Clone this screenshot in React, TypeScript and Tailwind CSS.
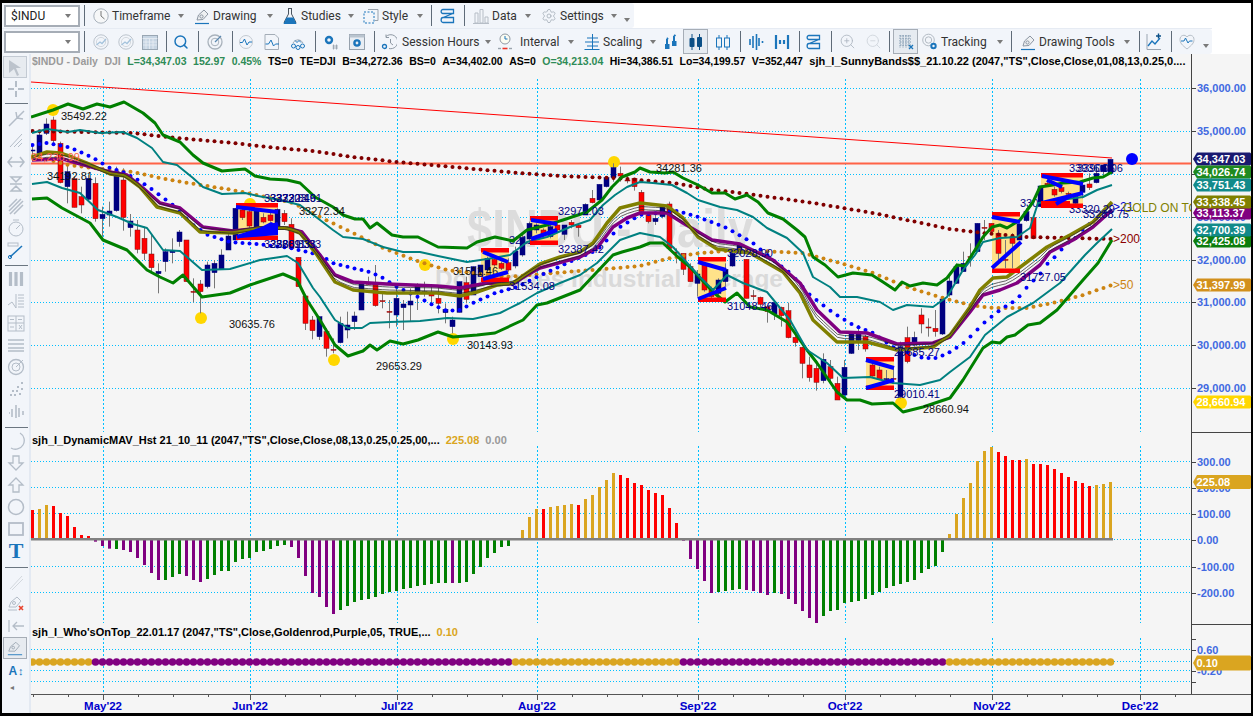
import { Settings, Search, ZoomIn, ZoomOut } from 'lucide-react';
import type { ReactNode } from 'react';

// chart data is read off the screenshot, in page pixels
const barX = (i: number) => 32.5 + 7 * i;

type Pts = number[][];

const upperGreen: Pts = [[31,117],[53,110],[68,104],[83,109],[97,104],[110,107],[124,102],[143,113],[155,123],[163,135],[180,142],[193,155],[203,163],[222,171],[245,169],[255,176],[270,179],[287,180],[300,183],[315,197],[333,207],[343,215],[355,219],[363,219],[370,228],[377,223],[392,235],[403,237],[418,237],[438,247],[467,248],[477,242],[495,237],[513,241],[527,230],[547,225],[563,220],[587,212],[602,200],[612,187],[622,177],[635,172],[640,168],[650,172],[665,173],[673,172],[683,178],[698,185],[712,193],[725,193],[735,199],[747,195],[758,202],[768,213],[783,219],[797,230],[805,237],[813,257],[825,265],[838,277],[853,273],[872,275],[883,282],[895,290],[902,282],[910,286],[923,283],[937,285],[947,278],[957,265],[965,266],[975,250],[983,237],[992,227],[1000,225],[1007,228],[1020,220],[1033,202],[1040,187],[1053,185],[1063,183],[1080,182],[1093,178],[1103,177],[1112,172]];
const upperTeal: Pts = [[32,133],[47,129],[68,132],[80,130],[100,133],[123,132],[137,138],[152,148],[163,162],[177,165],[193,178],[203,187],[222,194],[245,193],[258,196],[280,200],[300,205],[320,220],[333,230],[343,237],[363,239],[383,247],[403,252],[420,252],[438,256],[467,262],[487,259],[510,255],[527,242],[547,237],[570,227],[590,220],[603,205],[615,195],[627,187],[640,182],[653,183],[672,185],[687,193],[698,200],[720,207],[737,210],[753,217],[767,228],[787,238],[803,253],[813,277],[830,287],[840,297],[857,297],[880,302],[893,310],[907,305],[933,307],[947,297],[963,270],[975,255],[983,242],[1000,238],[1017,237],[1030,228],[1038,203],[1060,200],[1083,197],[1097,190],[1112,185]];
const olive: Pts = [[32,157],[47,152],[60,153],[72,157],[87,163],[110,174],[125,176],[140,187],[157,207],[180,213],[200,232],[233,233],[260,228],[287,228],[300,233],[317,255],[335,282],[353,290],[387,293],[437,293],[460,296],[477,292],[497,285],[513,283],[527,273],[540,264],[560,257],[580,252],[593,243],[607,223],[620,208],[640,203],[667,206],[683,218],[698,237],[717,249],[750,253],[783,272],[800,293],[813,320],[837,342],[867,342],[897,350],[933,347],[950,335],[970,307],[980,290],[993,278],[1007,277],[1027,262],[1047,247],[1070,235],[1093,222],[1112,202]];
const purple: Pts = [[32,160],[63,159],[77,163],[110,172],[127,175],[143,188],[160,203],[180,208],[203,227],[233,231],[260,228],[287,228],[302,232],[320,255],[335,275],[353,282],[387,284],[437,286],[460,288],[487,283],[513,284],[527,275],[540,268],[580,257],[597,248],[613,227],[627,218],[640,213],[667,213],[683,223],[712,240],[740,244],[773,260],[800,283],[817,310],[840,332],[867,333],[897,344],[933,343],[950,337],[970,312],[983,295],[1000,290],[1017,283],[1040,265],[1050,252],[1073,240],[1093,227],[1112,210]];
const lowerTeal: Pts = [[32,184],[47,182],[62,188],[80,193],[98,210],[117,217],[133,224],[147,228],[163,250],[180,251],[202,270],[230,269],[260,260],[287,256],[298,263],[313,288],[320,297],[335,320],[348,328],[362,328],[370,323],[390,322],[420,321],[447,318],[473,319],[500,313],[520,303],[537,293],[560,283],[580,275],[597,263],[620,240],[640,233],[660,237],[673,247],[698,275],[713,290],[727,275],[743,283],[767,292],[790,320],[807,350],[827,363],[843,378],[870,377],[893,383],[920,385],[940,380],[950,372],[970,357],[985,335],[1007,317],[1033,303],[1060,283],[1085,255],[1097,243],[1112,229]];
const lowerGreen: Pts = [[32,199],[47,198],[62,208],[90,223],[103,240],[127,250],[147,270],[160,277],[173,283],[183,275],[202,297],[230,293],[250,285],[283,274],[297,280],[307,300],[320,320],[335,345],[348,356],[363,351],[370,345],[377,350],[390,341],[403,344],[418,340],[438,332],[453,337],[477,335],[495,333],[523,320],[537,305],[547,303],[580,290],[613,255],[622,252],[640,247],[650,243],[663,243],[678,257],[690,267],[713,292],[725,302],[737,293],[750,307],[767,310],[787,322],[807,350],[817,363],[837,392],[847,400],[860,400],[872,404],[893,403],[903,412],[923,407],[950,398],[963,380],[983,348],[992,342],[1000,343],[1007,337],[1015,335],[1028,325],[1040,323],[1057,310],[1083,280],[1098,263],[1112,240]];
const ma200: Pts = [[33,131],[133,133],[167,137],[200,140],[233,143],[267,147],[313,151],[353,157],[397,162],[453,167],[507,172],[560,176],[613,178],[640,180],[673,183],[707,189],[740,193],[807,202],[873,213],[950,229],[983,233],[1027,237],[1067,238],[1112,239]];
const ma50: Pts = [[32,157],[50,160],[68,165],[110,170],[133,172],[160,178],[200,185],[227,189],[257,195],[293,203],[320,217],[353,233],[383,248],[420,262],[447,270],[507,277],[553,273],[593,270],[640,266],[670,258],[700,253],[740,250],[803,253],[840,263],[873,273],[907,287],[943,298],[970,305],[993,308],[1027,308],[1057,302],[1083,295],[1112,285]];
const ma21: Pts = [[33,145],[47,143],[68,147],[83,153],[97,160],[110,168],[123,172],[138,180],[153,190],[173,205],[193,225],[208,235],[230,242],[257,244],[290,248],[320,255],[333,263],[348,267],[370,272],[383,278],[397,287],[418,297],[433,305],[447,311],[460,310],[473,303],[495,293],[517,287],[537,277],[567,263],[597,250],[620,227],[640,215],[677,211],[698,217],[727,228],[753,243],[773,260],[790,273],[810,295],[832,312],[853,325],[873,333],[893,347],[923,358],[937,358],[950,352],[965,342],[985,322],[1000,310],[1013,302],[1021,295],[1027,287],[1034,280],[1042,272],[1048,263],[1056,256],[1062,249],[1069,242],[1077,237],[1083,229],[1097,218],[1112,203]];

const valueAt = (pts: Pts, x: number) => {
  for (let i = 1; i < pts.length; i++) {
    if (x <= pts[i][0]) {
      const [x0, y0] = pts[i - 1];
      const [x1, y1] = pts[i];
      return y0 + ((y1 - y0) * (x - x0)) / (x1 - x0);
    }
  }
  return pts[pts.length - 1][1];
};

const toLine = (pts: Pts) => pts.map((p) => p.join(',')).join(' ');
const barsIdx = Array.from({ length: 155 }, (_, i) => i);

// [colour, wick top, wick bottom, body top, body bottom], y in 3x crop pixels
type C = [string, number, number, number, number];
const c3: C[] = [['n',133,165,150,152],['n',90,170,105,160],['n',55,105,72,100],['r',50,130,60,122],['r',125,250,130,248],['n',190,310,215,260],['r',230,322,236,322],['r',260,340,290,315],['n',225,300,235,298],['r',232,365,250,356],['n',320,410,343,356],['n',305,380,333,345],['n',200,335,215,332],['r',205,392,240,352],['n',342,410,363,383],['r',360,460,390,448],['r',380,480,415,460],['r',405,520,462,503],['n',490,580,514,521],['n',445,515,455,485],['n',415,490,451,458],['n',390,440,396,425],['r',420,545,420,545],['r',535,607,574,575],['r',540,640,552,575],['n',485,565,495,560],['n',480,565,490,518],['n',448,510,465,507],['n',395,450,408,450],['n',325,420,325,420],['r',325,360,330,353],['r',330,385,335,378],['n',325,395,330,390],['r',340,370,352,366],['r',335,365,345,362],['n',325,390,328,385],['r',330,375,340,365],['r',355,445,373,445],['r',472,560,472,560],['r',588,690,588,670],['r',648,718,660,692]];
const c4: C[] = [['n',530,600,530,590],['r',565,650,575,625],['r',595,640,628,629],['n',530,610,550,608],['n',515,595,555,570],['n',515,570,528,545],['n',425,510,425,510],['r',410,435,428,433],['r',375,500,432,497],['r',460,505,482,483],['r',480,565,514,515],['n',435,560,475,525],['n',480,570,492,503],['n',445,545,483,495],['n',430,510,437,460],['n',425,470,455,456],['r',440,490,458,468],['r',440,520,475,490],['n',490,550,508,518],['n',530,580,540,560],['n',425,517,425,517],['r',410,490,428,478],['n',380,465,380,465],['n',375,410,375,410],['n',350,395,355,390],['r',350,380,358,375],['r',365,390,370,385],['r',355,395,368,390],['n',320,385,333,378],['n',285,350,292,345],['n',245,300,250,297],['n',250,280,255,270],['r',265,295,270,285],['n',255,295,260,290],['r',250,275,255,270],['n',255,300,255,283],['r',240,265,247,255],['r',250,290,256,263],['n',190,225,193,225],['r',150,190,175,188],['n',133,180,133,180],['n',110,142,113,140],['n',70,125,83,113],['r',80,125,100,108],['r',105,130,120,121],['r',115,152,115,140]];
const c5: C[] = [['r',120,190,127,185],['r',190,220,195,215],['n',195,225,205,215],['n',165,205,170,200],['r',155,300,162,295],['r',295,340,306,309],['r',310,375,310,358],['r',340,395,350,395],['n',360,440,372,400],['r',340,425,345,420],['r',410,445,415,440],['n',385,435,390,430],['n',340,410,358,395],['n',300,350,310,348],['n',280,315,285,310],['r',328,445,328,445],['r',420,450,437,439],['r',440,480,442,463],['r',465,518,470,485],['n',455,510,457,492],['r',470,530,472,497],['r',458,565,482,563],['r',545,590,562,578],['r',590,685,592,640],['r',620,695,645,683],['r',630,722,655,697],['n',610,700,628,692],['r',630,700,650,685],['r',680,750,700,750],['n',630,738,652,735],['n',545,612,552,610],['n',525,600,552,572],['r',555,605,560,597],['r',630,680,645,678],['r',650,690,660,688],['n',660,700,686,687],['r',650,700,685,687],['n',575,745,590,740],['r',530,640,563,635],['n',545,590,562,585],['r',475,550,495,522],['r',505,560,531,533],['r',480,560,535,545],['n',445,555,447,552],['n',375,440,393,435],['n',340,402,350,400]];
const c6: C[] = [['n',335,395,370,395],['r',310,380,350,351],['n',250,335,250,335],['r',240,300,262,263],['r',250,275,250,275],['r',270,360,280,340],['r',300,385,358,359],['r',280,385,290,310],['n',252,300,252,300],['n',205,245,215,242],['r',225,295,233,295],['n',138,200,138,200],['r',125,140,130,137],['r',140,170,148,165],['r',135,160,143,155],['r',155,165,160,161],['n',165,195,170,190],['n',135,175,135,157],['r',100,150,132,143],['n',85,130,100,128],['n',75,110,75,95],['n',58,100,58,100]];
const candles: C[] = [
  ...c3.map((c) => [c[0], ...c.slice(1).map((v) => 100 + (v as number) / 3)] as C),
  ...c4.map((c) => [c[0], ...c.slice(1).map((v) => 140 + (v as number) / 3)] as C),
  ...c5.map((c) => [c[0], ...c.slice(1).map((v) => 150 + (v as number) / 3)] as C),
  ...c6.map((c) => [c[0], ...c.slice(1).map((v) => 140 + (v as number) / 3)] as C),
];

// histogram tops in 3x crop pixels below y=420, baseline is 357
const histTops = [270,267,255,258,279,288,321,345,348,365,378,386,387,390,396,414,435,459,480,480,471,462,468,480,486,477,465,453,453,426,417,414,396,393,387,378,375,381,414,468,519,531,561,582,570,558,546,540,537,531,522,516,513,507,504,498,495,492,489,489,489,489,486,462,441,414,399,381,378,359,330,291,267,267,261,258,255,252,255,237,225,201,180,159,165,174,189,195,210,219,225,264,309,362,417,447,483,519,516,513,510,507,510,513,519,525,519,522,537,552,573,594,609,588,573,570,549,546,543,537,525,516,504,498,492,486,480,459,447,438,396,342,282,234,189,123,93,81,96,108,120,120,117,132,132,135,147,159,171,183,189,198,195,192,186];
const histCols = 'rggrrrrrrpppnppppppnnnpppnnnnnnnnnnnnpppppppnnnnnnnnnnnn' + 'nnnnpnnnnnnnnggggrggggrgggggrrrrrrrrrpppppnnnnppppnppppppnnn' + 'nnnnnnnnnnnnnnngggggggrrrrgrrrrrrrrrggg';
const histColour: Record<string, string> = { r: '#ff0000', g: '#daa520', p: '#800080', n: '#008000' };

const monthX = [103, 250, 397, 537, 698, 845, 992, 1140];
const months = ["May'22", "Jun'22", "Jul'22", "Aug'22", "Sep'22", "Oct'22", "Nov'22", "Dec'22"];

const behindText: [string, number, number][] = [
  ['32113.25', 509, 244],
  ['33071.90', 1020, 207],
];
const blackText: [string, number, number][] = [
  ['35492.22', 61, 120], ['34192.81', 47, 180], ['33272.34', 299, 215], ['30635.76', 229, 328],
  ['29653.29', 376, 370], ['30143.93', 467, 349], ['31511.46', 453, 275], ['34281.36', 656, 172], ['28660.94', 923, 413],
];
const navyText: [string, number, number][] = [
  ['33272.81', 264, 202], ['33232.46', 270, 202], ['33203.91', 276, 202],
  ['32588.83', 264, 248], ['32609.33', 270, 248], ['32611.33', 276, 248],
  ['32972.03', 558, 215], ['32387.42', 558, 253], ['31534.08', 509, 290],
  ['32028.90', 727, 257], ['31048.46', 727, 310], ['29685.27', 894, 356], ['29010.41', 894, 398],
  ['31727.05', 1020, 281], ['33936.06', 1069, 172], ['33906.06', 1077, 172], ['33320.29', 1069, 213], ['33288.75', 1083, 218],
];
const yellowDots = [[53,110],[201,318],[250,204],[334,360],[425,265],[453,339],[614,162],[901,403]];

type Box = { x: number; w: number; top: number; bot: number; a: number[]; b: number[] };
const boxes: Box[] = [
  { x: 236, w: 42, top: 203, bot: 240, a: [236,207,278,212], b: [237,237,278,224] },
  { x: 481, w: 28, top: 248, bot: 282, a: [483,252,508,262], b: [483,279,508,272] },
  { x: 530, w: 28, top: 216, bot: 245, a: [531,220,557,224], b: [531,239,557,230] },
  { x: 698, w: 28, top: 257, bot: 302, a: [698,262,726,270], b: [698,299,726,288] },
  { x: 866, w: 28, top: 357, bot: 390, a: [866,360,894,368], b: [866,388,894,380] },
  { x: 992, w: 28, top: 212, bot: 273, a: [992,217,1020,222], b: [992,268,1021,242] },
  { x: 1041, w: 42, top: 173, bot: 208, a: [1042,176,1083,184], b: [1042,203,1083,193] },
];

function Grid({ ys, top, bottom }: { ys: number[]; top: number; bottom: number }) {
  return (
    <g stroke="#00bfff" strokeWidth={1} shapeRendering="crispEdges">
      {ys.map((y) => (
        <line key={y} x1={31} x2={1191} y1={y + 0.5} y2={y + 0.5} strokeDasharray="1 2" />
      ))}
      {monthX.map((x) => (
        <line key={x} x1={x + 0.5} x2={x + 0.5} y1={top} y2={bottom} strokeDasharray="2 2" />
      ))}
    </g>
  );
}

function PricePlot() {
  const mid = barsIdx.map((i) => {
    const x = barX(i);
    return [x, (valueAt(olive, x) + valueAt(purple, x)) / 2];
  });
  return (
    <svg width={1160} height={378} viewBox="31 54 1160 378" className="block">
      <Grid ys={[88, 131, 174, 217, 260, 302, 345, 388]} top={79} bottom={432} />
      <text x={467} y={247} fill="#dcdcdc" textLength={286} lengthAdjust="spacingAndGlyphs" className="text-[54px] font-bold">$INDU - Daily</text>
      <text x={435} y={287} fill="#dadada" textLength={348} lengthAdjust="spacingAndGlyphs" className="text-[23.5px] font-bold">Dow Jones Industrial Average</text>
      <line x1={31} y1={82} x2={1112} y2={158} stroke="#ff0000" strokeWidth={1} />
      <line x1={31} y1={163.5} x2={1191} y2={163.5} stroke="#ff6347" strokeWidth={2} />
      <circle cx={1132} cy={159} r={6} fill="#0000ff" />
      {yellowDots.map(([x, y]) => (
        <circle key={x} cx={x} cy={y} r={6} fill="#ffd700" />
      ))}
      <g fill="#000080" className="text-[11px]">
        {behindText.map(([t, x, y]) => <text key={t} x={x} y={y}>{t}</text>)}
      </g>
      {boxes.map((b) => (
        <rect key={b.x} x={b.x} y={b.top} width={b.w} height={b.bot - b.top} fill="#ffe28a" />
      ))}
      {candles.map((c, i) => {
        const x = barX(i);
        const h = c[4] - c[3];
        return (
          <g key={i}>
            <line x1={x} x2={x} y1={c[1]} y2={c[2]} stroke="#777777" strokeWidth={1} />
            <rect x={x - 2.5} y={c[3]} width={5} height={Math.max(h, 1)} fill={c[0] === 'r' ? '#ff0000' : '#000080'} stroke={c[0] === 'r' ? '#7a1010' : '#000080'} strokeWidth={0.5} />
          </g>
        );
      })}
      {barsIdx.map((i) => (
        <circle key={i} cx={barX(i)} cy={valueAt(ma200, barX(i))} r={2} fill="#800000" />
      ))}
      {barsIdx.map((i) => (
        <circle key={i} cx={barX(i)} cy={valueAt(ma50, barX(i))} r={2} fill="#cc8412" />
      ))}
      {barsIdx.map((i) => (
        <circle key={i} cx={barX(i)} cy={valueAt(ma21, barX(i))} r={2} fill="#0000ff" />
      ))}
      <g fill="none" strokeLinejoin="round">
        <polyline points={toLine(lowerGreen)} stroke="#008000" strokeWidth={3} />
        <polyline points={toLine(upperGreen)} stroke="#008000" strokeWidth={3} />
        <polyline points={toLine(lowerTeal)} stroke="#008080" strokeWidth={2} />
        <polyline points={toLine(upperTeal)} stroke="#008080" strokeWidth={2} />
        <polyline points={toLine(purple)} stroke="#800080" strokeWidth={3.5} />
        <polyline points={toLine(olive)} stroke="#808000" strokeWidth={3.5} />
        <polyline points={toLine(mid.map(([x, y]) => [x, y - 1.5]))} stroke="#222222" strokeWidth={0.7} />
        <polyline points={toLine(mid.map(([x, y]) => [x, y + 1.5]))} stroke="#222222" strokeWidth={0.7} />
      </g>
      <g className="text-[11px]">
        <text x={31} y={161} fill="#ff6347">34,236.99</text>
        <g fill="#111111">{blackText.map(([t, x, y]) => <text key={t} x={x} y={y}>{t}</text>)}</g>
        <g fill="#000080">{navyText.map(([t, x, y]) => <text key={t} x={x} y={y}>{t}</text>)}</g>
      </g>
      {boxes.map((b) => (
        <g key={b.x}>
          <rect x={b.x} y={b.top} width={b.w} height={4.5} fill="#ff0000" />
          <rect x={b.x} y={b.bot - 4.5} width={b.w} height={4.5} fill="#ff0000" />
          <line x1={b.a[0]} y1={b.a[1]} x2={b.a[2]} y2={b.a[3]} stroke="#0000ff" strokeWidth={4} />
          <line x1={b.b[0]} y1={b.b[1]} x2={b.b[2]} y2={b.b[3]} stroke="#0000ff" strokeWidth={4} />
        </g>
      ))}
      <polygon points="240,238 271,222 278,225 278,235" fill="#0000ff" />
      <rect x={1041} y={201} width={29} height={4} fill="#ff0000" />
      <line x1={1047} y1={180} x2={1062} y2={187} stroke="#0000ff" strokeWidth={4} />
      <line x1={1056} y1={204} x2={1070} y2={196} stroke="#0000ff" strokeWidth={4} />
      <g className="text-[12px]">
        <text x={1113} y={211} fill="#0000cd">&gt;21</text>
        <text x={1123} y={212} fill="#808000">GOLD ON TOP</text>
        <text x={1113} y={243} fill="#8b0000">&gt;200</text>
        <text x={1113} y={289} fill="#cc8412">&gt;50</text>
      </g>
    </svg>
  );
}

function HistPlot() {
  return (
    <svg width={1160} height={192} viewBox="31 432 1160 192" className="block">
      <Grid ys={[461, 487, 513, 539, 566, 592]} top={446} bottom={623} />
      {histTops.map((t, i) => {
        const top = 420 + t / 3;
        return (
          <rect key={i} x={barX(i) - 1.5} y={Math.min(top, 539)} width={3} height={Math.abs(top - 539)} fill={histColour[histCols[i]]} />
        );
      })}
      <rect x={31} y={538} width={1082} height={2.5} fill="#808080" />
    </svg>
  );
}

function TopPlot() {
  return (
    <svg width={1160} height={70} viewBox="31 624 1160 70" className="block">
      <Grid ys={[649, 661, 670, 681]} top={638} bottom={694} />
      {barsIdx.map((i) => {
        const gold = (histTops[i] < 357 || histTops[i] === 359) && i !== 68;
        return <circle key={i} cx={barX(i)} cy={662} r={3.8} fill={gold ? '#daa520' : '#800080'} />;
      })}
    </svg>
  );
}

function Tag({ y, bg, label, h = 13, text = '#ffffff' }: { y: number; bg: string; label: string; h?: number; text?: string }) {
  const t = y - h / 2;
  const b = y + h / 2;
  return (
    <g>
      <polygon points={`1192,${y} 1196,${t} 1249,${t} 1250,${t + 1} 1250,${b - 1} 1249,${b} 1196,${b}`} fill={bg} />
      <text x={1195.5} y={y + 4} fill={text} className="text-[11px] font-bold">{label}</text>
    </g>
  );
}

function AxisLabel({ y, label }: { y: number; label: string }) {
  return (
    <g>
      <line x1={1191} x2={1195} y1={y + 0.5} y2={y + 0.5} stroke="#444444" />
      <text x={1196} y={y + 4} fill="#4169e1" className="text-[11px] font-bold">{label}</text>
    </g>
  );
}

const Arrow = ({ cls = 'ml-[9px]' }: { cls?: string }) => (
  <svg width={6} height={4} viewBox="0 0 6 4" className={`shrink-0 ${cls}`}><polygon points="0,0 6,0 3,4" fill="#7a7a7a" /></svg>
);
const Sep = ({ cls }: { cls: string }) => <div className={`h-[21px] w-px shrink-0 bg-[#5f6b78] ${cls}`} />;

const Ico = ({ w = 16, cls = '', children }: { w?: number; cls?: string; children: ReactNode }) => (
  <svg width={w} height={18} viewBox="0 0 16 18" fill="none" strokeWidth={1} className={`shrink-0 ${cls}`}>{children}</svg>
);

const G = '#a9b2bc';
const B = '#1b75bb';

const ClockIcon = () => (<><circle cx="8" cy="9" r="7.2" stroke={G} fill="#f6f7f8" /><path d="M8 4v5l3.5 3" stroke="#777" /></>);
const PencilIcon = () => (<><path d="M3 13 4.5 8 10 3l4 4-5 5.5z" stroke="#8c96a2" fill="#eef0f2" /><circle cx="7.5" cy="9.5" r="1.6" stroke="#8c96a2" /><path d="M1 16.5h14" stroke={B} strokeWidth={1.2} /></>);
const FlaskIcon = () => (<><path d="M6 1.5h4M6.5 2v5L2 15.5h12L9.5 7V2" stroke="#4b5560" /><path d="M4.5 10.5h7l3 6.5h-13z" fill={B} /></>);
const StyleIcon = () => (<><rect x="1" y="5" width="10" height="11" stroke={B} strokeDasharray="2 1.5" /><path d="M5 2.5h10v11h-3" stroke="#99a2ad" /></>);
const LayersIcon = () => (<path d="M3 2.5h10.5v4H3C0.5 6.5 0.5 2.5 3 2.5zM3 10.5h10.5v5H3C0.5 15.5 0.5 10.5 3 10.5zM13 6.5 3 10.5" stroke={B} strokeWidth={1.3} />);
const DataIcon = () => (<path d="M2 16V6h3v10zM7 16V2.5h3V16zM12 16v-6h3v6zM0 16.5h16" stroke="#b6bdc6" />);
const RoundChart = () => (<><circle cx="8" cy="9" r="7.2" stroke="#bcc4cd" /><circle cx="8" cy="9" r="4.6" stroke="#d3d8de" /><path d="m3.5 12 3.5-3 2 1.5L13 6" stroke="#a5c3dc" strokeWidth={1.3} /></>);
const TableIcon = () => (<><rect x="0.5" y="2.5" width="15" height="14" fill="#c7d5e3" stroke="#99a6b3" /><path d="M0.5 5.5h15M4 6v10M7.5 6v10M11 6v10M1 9h14M1 12h14" stroke="#eef2f6" strokeWidth={0.7} /></>);
const RadarIcon = () => (<><circle cx="8" cy="9" r="7" stroke={G} strokeWidth={1.3} /><circle cx="8" cy="9" r="3.8" stroke={G} /><path d="M8 9l6-6" stroke="#5a88b0" strokeWidth={1.3} /></>);
const WaveCircle = () => (<><circle cx="8" cy="9" r="6.5" stroke="#c3cad2" /><path d="M2 9.5h2.5L6.5 6 9 12l2-3h3" stroke={B} /></>);
const WaveBox = () => (<><path d="M1 16.5V1.5h10l3.5 3.5v11.5z" stroke="#a4adb7" /><path d="M1.5 11h3L7 7l2.5 6 2-2h3.5" stroke={B} /></>);
const NetIcon = () => (<><path d="M3 10a5.5 5.5 0 0 1 10 0" stroke="#a4adb7" /><circle cx="3.5" cy="13" r="2" stroke={B} /><circle cx="8" cy="14.5" r="2" stroke={B} /><circle cx="12.5" cy="13" r="2" stroke={B} /><path d="M5 7.5 7 9.5l2-2 2 2" stroke={B} /></>);
const GearHash = () => (<><circle cx="6" cy="7" r="3" stroke={B} strokeWidth={2.4} /><path d="M10.5 11.5v5M13.5 11.5v5M9.5 13h5.5M9.5 15h5.5" stroke="#8a95a1" strokeWidth={0.7} /></>);
const GearBox = () => (<><rect x="0.5" y="1.5" width="15" height="15" stroke="#96a1ad" fill="#e8edf3" /><rect x="0.5" y="1.5" width="15" height="3" fill="#b9c4cf" /><circle cx="8" cy="10" r="2.6" stroke={B} strokeWidth={2.4} /></>);
const SessionIcon = () => (<><path d="M5 3.5A7 7 0 1 1 8 15.5" stroke="#8e98a3" /><path d="M5 1.5v3h3M9.5 6v4l2.5 2" stroke="#8e98a3" /><circle cx="3.5" cy="13.5" r="2" stroke={B} strokeWidth={1.3} /></>);
const IntervalIcon = () => (<><circle cx="8" cy="6" r="5" stroke="#8e98a3" fill="#fbfcf2" /><path d="M8 3v3h2.5" stroke={B} /><path d="M1 15.5h3" stroke="#9aa3ad" strokeWidth={1.4} /><path d="M5.5 15.5h5" stroke="#ee3124" strokeWidth={1.6} /><path d="M12 15.5h3" stroke="#9aa3ad" strokeWidth={1.4} /></>);
const ScaleIcon = () => (<path d="M8.5 1v16M3 5h11M1 9h14M3 13h11M0.5 16.5h15" stroke={B} />);
const NotesIcon = () => (<path d="M3 6v9M2 15h2.5v-3H2zM10 3v9M9 12h2.5V9H9zM3 6l1-1M10 3l1.5-1" stroke={B} strokeWidth={2} />);
const CandleHollow = () => (<><path d="M4 2v15M12 2v15" stroke={B} /><rect x="1.5" y="5" width="5" height="9" fill="#eef3f8" stroke={B} /><rect x="9.5" y="5" width="5" height="9" fill="#eef3f8" stroke={B} /></>);
const MiniBars = () => (<path d="M1 6v6M4 3v12M7.5 1v16M10 5v8M13.5 8v2" stroke={B} strokeWidth={1.6} />);
const MiniBars2 = () => (<path d="M2 2v14M14 2v14M6 7v4M10 7v4" stroke={B} strokeWidth={2.2} />);
const DottedGrid = () => (<><path d="M2 2v13M5 2v13M8 2v13M11 2v13M2 3h11M2 6h11M2 9h11M2 12h11" stroke="#7f97ae" strokeWidth={1} strokeDasharray="1.5 1" /><path d="m11 12 4 4m0-4-4 4" stroke={B} strokeWidth={1.3} /></>);
const TrackIcon = () => (<><circle cx="6.5" cy="7" r="5.8" stroke="#b3bbc4" /><circle cx="6.5" cy="7" r="3.2" stroke="#b3bbc4" /><circle cx="11.5" cy="13" r="2.2" stroke={B} strokeWidth={2} /></>);
const TrendPlus = () => (<><path d="M1 1v15.5h14" stroke="#9aa5b1" /><path d="m2 13 4-5 3 3 5-6" stroke={B} strokeWidth={1.4} /><path d="M12.5 0.5v5M10 3h5" stroke="#0b4f86" strokeWidth={1.4} /></>);
const HeartWave = () => (<><path d="M8 16C3 12 1 10 1 6.500 1 2 6 1 8 4c2-3 7-2 7 2.500 0 3.500-2 5.500-7 9.500z" stroke="#b7bfc8" /><path d="M2 8h3l1.500-3 2.500 5 1.500-2h3" stroke={B} /></>);

const Label = ({ w, cls, children }: { w: string; cls: string; children: string }) => (
  <span className={`${w} ${cls} shrink-0 whitespace-nowrap text-[12px] leading-none text-[#333]`}>{children}</span>
);

function SymbolBox({ value }: { value: string }) {
  return (
    <div className="flex h-[22px] w-[76px] shrink-0 items-center justify-between border-2 border-[#a6adb6] bg-white pl-[5px] pr-[7px] text-[12px] text-[#222]">
      <span>{value}</span>
      <Arrow cls="" />
    </div>
  );
}

function ToolbarTop() {
  return (
    <div className="flex h-[25px] w-[632px] items-center rounded-r-[3px] bg-[#f2f5fa] pl-[2px]">
      <SymbolBox value="$INDU" />
      <Sep cls="ml-[4px]" />
      <Ico cls="ml-[8px]"><ClockIcon /></Ico>
      <Label w="w-[57px]" cls="ml-[3px]">Timeframe</Label>
      <Arrow />
      <Ico cls="ml-[10px]"><PencilIcon /></Ico>
      <Label w="w-[44px]" cls="ml-[3px]">Drawing</Label>
      <Arrow cls="ml-[10px]" />
      <Ico cls="ml-[9px]"><FlaskIcon /></Ico>
      <Label w="w-[38px]" cls="ml-[3px]">Studies</Label>
      <Arrow />
      <Ico cls="ml-[9px]"><StyleIcon /></Ico>
      <Label w="w-[25px]" cls="ml-[3px]">Style</Label>
      <Arrow cls="ml-[10px]" />
      <Sep cls="ml-[8px]" />
      <Ico cls="ml-[8px]"><LayersIcon /></Ico>
      <Sep cls="ml-[8px]" />
      <Ico cls="ml-[8px]"><DataIcon /></Ico>
      <Label w="w-[24px]" cls="ml-[3px]">Data</Label>
      <Arrow />
      <Settings size={16} strokeWidth={1.2} color="#a4adb7" className="ml-[10px] shrink-0" />
      <Label w="w-[42px]" cls="ml-[3px]">Settings</Label>
      <Arrow />
      <Arrow cls="ml-[7px] mt-[8px]" />
    </div>
  );
}

function ToolbarBottom() {
  return (
    <div className="flex h-[25px] w-[1210px] items-center rounded-r-[3px] bg-[#f2f5fa] pl-[2px]">
      <SymbolBox value="" />
      <Sep cls="ml-[4px]" />
      <Ico cls="ml-[8px]"><RoundChart /></Ico>
      <Ico cls="ml-[9px]"><RoundChart /></Ico>
      <Ico cls="ml-[8px]"><TableIcon /></Ico>
      <Sep cls="ml-[8px]" />
      <Search size={16} strokeWidth={2.2} color={B} className="ml-[6px] shrink-0" />
      <Sep cls="ml-[9px]" />
      <Ico cls="ml-[8px]"><RadarIcon /></Ico>
      <Sep cls="ml-[9px]" />
      <Ico cls="ml-[5px]"><WaveCircle /></Ico>
      <Ico cls="ml-[10px]"><WaveBox /></Ico>
      <Ico cls="ml-[10px]"><NetIcon /></Ico>
      <Sep cls="ml-[9px]" />
      <Ico cls="ml-[7px]"><GearHash /></Ico>
      <Ico cls="ml-[10px]"><GearBox /></Ico>
      <Sep cls="ml-[9px]" />
      <Ico cls="ml-[6px]"><SessionIcon /></Ico>
      <Label w="w-[74px]" cls="ml-[5px]">Session Hours</Label>
      <Arrow />
      <Ico cls="ml-[6px]"><IntervalIcon /></Ico>
      <Label w="w-[39px]" cls="ml-[7px]">Interval</Label>
      <Arrow />
      <Ico cls="ml-[10px]"><ScaleIcon /></Ico>
      <Label w="w-[38px]" cls="ml-[3px]">Scaling</Label>
      <Arrow />
      <Ico cls="ml-[8px]"><NotesIcon /></Ico>
      <div className="ml-[3px] flex h-[25px] w-[25px] shrink-0 items-center justify-center border border-[#a6adb6] bg-[#e6ebf1]">
        <svg width={16} height={18} viewBox="0 0 16 18"><path d="M4 1v16M11.500 1v16" stroke="#0b4f86" /><rect x="1.500" y="5" width="5" height="9" rx="1" fill="#0b4f86" /><rect x="9" y="4" width="5" height="10" rx="1" fill="#0b4f86" /></svg>
      </div>
      <Ico cls="ml-[7px]"><CandleHollow /></Ico>
      <Sep cls="ml-[9px]" />
      <Ico cls="ml-[8px]"><MiniBars /></Ico>
      <Ico cls="ml-[9px]"><MiniBars2 /></Ico>
      <Sep cls="ml-[9px]" />
      <Ico cls="ml-[6px]"><LayersIcon /></Ico>
      <Sep cls="ml-[9px]" />
      <ZoomIn size={17} strokeWidth={1.2} color="#aeb6c0" className="ml-[7px] shrink-0" />
      <ZoomOut size={17} strokeWidth={1.2} color="#cdd3da" className="ml-[9px] shrink-0" />
      <Sep cls="ml-[7px]" />
      <div className="ml-[3px] flex h-[25px] w-[25px] shrink-0 items-center justify-center border border-[#a6adb6] bg-[#e6ebf1]">
        <Ico><DottedGrid /></Ico>
      </div>
      <Ico cls="ml-[4px]"><TrackIcon /></Ico>
      <Label w="w-[47px]" cls="ml-[3px]">Tracking</Label>
      <Arrow />
      <Sep cls="ml-[8px]" />
      <Ico cls="ml-[8px]"><PencilIcon /></Ico>
      <Label w="w-[73px]" cls="ml-[3px]">Drawing Tools</Label>
      <Arrow cls="ml-[12px]" />
      <Sep cls="ml-[9px]" />
      <Ico cls="ml-[6px]"><TrendPlus /></Ico>
      <Sep cls="ml-[9px]" />
      <Ico cls="ml-[7px]"><HeartWave /></Ico>
      <Arrow cls="ml-[8px] mt-[8px]" />
    </div>
  );
}

const LG = '#b4bdc8';
const sideIcons: Record<string, ReactNode> = {
  cross: <path d="M9 1v6M9 11v6M1 9h6M11 9h6" stroke={LG} strokeWidth={2} />,
  fork: <path d="M2 17 10 9l7-7M10 9l6 1M10 9 9 3" stroke={LG} strokeWidth={1.5} />,
  hatch: <path d="M3 16 15 3M7 16 15 8M11 16l4-4" stroke={LG} />,
  hArrow: <path d="M1 9h16M5 4 1 9l4 5M13 4l4 5-4 5" stroke={LG} strokeWidth={1.5} />,
  vArrow: <path d="M3 9h12M4 2h10l-5 5zM4 16h10l-5-5z" stroke={LG} strokeWidth={1.5} />,
  lines: <path d="M2 10 10 2M2 14 14 2M3 17 16 4M7 17 16 8" stroke={LG} strokeWidth={1.5} />,
  gauge: <><circle cx="9" cy="10" r="7" stroke={LG} /><path d="M9 10 13 6M6 1h6" stroke={LG} /></>,
  ruler: <><path d="m3 16 12-11" stroke="#1b75bb" strokeWidth={1.5} /><circle cx="3" cy="16" r="1.6" stroke="#1b75bb" /><rect x="1" y="2" width="10" height="3" stroke={LG} /></>,
  cols: <path d="M3.500 2v14M9 2v14M14.500 2v14" stroke={LG} strokeWidth={3.2} />,
  fib: <path d="M1 13l4-3 4 6V2M11 3h6M11 6h6M11 9h6M11 12h6M11 15h6" stroke={LG} />,
  calc: <><rect x="1" y="2" width="16" height="15" stroke={LG} /><path d="M9 2v15M1 9h16M3 5.500h4M11 5.500h4M3 13h4M12 11l3 4M15 11l-3 4" stroke={LG} /></>,
  stack: <path d="M1 4h16M1 8h16M1 12h16M1 15h16" stroke={LG} strokeWidth={1.7} />,
  target: <><circle cx="9" cy="9" r="7.500" stroke={LG} strokeWidth={1.3} /><circle cx="9" cy="9" r="4" stroke={LG} /><path d="m9 9 7-7" stroke={LG} /></>,
  dots: <path d="M3 15h2M7 15h2M5 11h2M9 11h2M12 14h2M10 7h2M14 9h2M14 3h2" stroke={LG} strokeWidth={2} />,
  bars: <path d="M2 11h1M5 7v8M9 3v13M12 6v9M16 9v4" stroke={LG} strokeWidth={1.6} />,
  arc: <path d="M13 1a8 8 0 0 1-9 15" stroke={LG} strokeWidth={1.3} />,
  down: <path d="M6 2h6v7h4l-7 7-7-7h4z" stroke={LG} strokeWidth={1.3} />,
  up: <path d="M6 16h6V9h4L9 2 2 9h4z" stroke={LG} strokeWidth={1.3} />,
  circle: <circle cx="9" cy="9" r="7.500" stroke={LG} strokeWidth={1.5} />,
  rect: <rect x="2" y="3" width="14" height="12" stroke={LG} strokeWidth={1.8} />,
  line: <path d="M3 16 15 3M5 17 16 6" stroke="#d3d8de" strokeWidth={1} />,
  erase: <><path d="M2 12 4 7l6-5 4 4-5 6z" stroke={LG} /><circle cx="7" cy="8" r="1.500" stroke={LG} /><path d="M1 15h9" stroke={LG} /><path d="m12 11 4 4m0-4-4 4" stroke="#e8432e" strokeWidth={1.6} /></>,
  back: <path d="M2 3v12M17 9H6M10 5 6 9l4 4" stroke={LG} strokeWidth={1.3} />,
};

const SideIcon = ({ name }: { name: string }) => (
  <div className="flex h-[22px] w-full shrink-0 items-center justify-center">
    <svg width={18} height={18} viewBox="0 0 18 18" fill="none">{sideIcons[name]}</svg>
  </div>
);
const SideSep = ({ cls }: { cls: string }) => <div className={`mx-[2px] h-px w-[23px] shrink-0 bg-[#6b7681] ${cls}`} />;

function SideBar() {
  return (
    <div className="flex w-[29px] shrink-0 flex-col items-start border-r-2 border-[#e3e9f2] bg-[#f2f5fa] pt-[2px] pl-[1px]">
      <div className="flex h-[22px] w-[24px] shrink-0 items-center justify-center border border-[#c3cad3] bg-[#e7ebf0]">
        <svg width={16} height={17} viewBox="0 0 16 17"><path d="M2 1 14 9H9l3 7-2 1-3-7-5 4z" fill="#bcc3cc" /></svg>
      </div>
      <div className="w-[26px]"><SideIcon name="cross" /></div>
      <SideSep cls="mt-[3px] mb-[3px]" />
      <div className="w-[26px]">
        {['fork', 'hatch', 'hArrow', 'vArrow', 'lines', 'gauge', 'ruler'].map((n) => <SideIcon key={n} name={n} />)}
      </div>
      <SideSep cls="mt-[4px] mb-[2px]" />
      <div className="w-[26px]">
        {['cols', 'fib', 'calc', 'stack', 'target', 'dots', 'bars'].map((n) => <SideIcon key={n} name={n} />)}
      </div>
      <SideSep cls="mt-[5px] mb-[2px]" />
      <div className="w-[26px]">
        {['arc', 'down', 'up', 'circle', 'rect'].map((n) => <SideIcon key={n} name={n} />)}
        <div className="flex h-[22px] items-center justify-center font-['Liberation_Serif'] text-[22px] leading-none font-bold text-[#1b75bb]">T</div>
      </div>
      <SideSep cls="mt-[5px] mb-[3px]" />
      <div className="w-[26px]">
        {['line', 'erase', 'back'].map((n) => <SideIcon key={n} name={n} />)}
      </div>
      <div className="flex h-[22px] w-[24px] shrink-0 items-center justify-center border border-[#a6adb6] bg-[#e7ebf0]">
        <svg width={16} height={17} viewBox="0 0 18 18" fill="none"><path d="M2 12 4 7l6-5 4 4-5 6z" stroke="#9aa5b1" /><circle cx="7" cy="8" r="1.500" stroke="#9aa5b1" /><path d="M1 16h16" stroke="#1b75bb" /></svg>
      </div>
      <div className="mt-[2px] flex h-[20px] w-[26px] items-center justify-center gap-[1px] text-[12px] font-bold text-[#1b75bb]">
        A<span className="text-[11px] font-normal">↕</span>
      </div>
      <div className="ml-[7px] text-[8px] leading-[14px] text-[#777]">◂</div>
    </div>
  );
}

function PriceAxis() {
  return (
    <svg width={60} height={378} viewBox="1191 54 60 378" className="block">
      {[[88,'36,000.00'],[131,'35,000.00'],[174,'34,000.00'],[217,'33,000.00'],[260,'32,000.00'],[302,'31,000.00'],[345,'30,000.00'],[388,'29,000.00']].map(([y, l]) => (
        <AxisLabel key={l as string} y={y as number} label={l as string} />
      ))}
      <Tag y={159} bg="#191970" label="34,347.03" />
      <Tag y={172} bg="#1f8a1f" label="34,026.74" />
      <Tag y={185} bg="#128a8a" label="33,751.43" />
      <Tag y={213} bg="#800080" label="33,113.37" />
      <Tag y={202} bg="#808000" label="33,338.45" />
      <Tag y={241} bg="#0c7d0c" label="32,425.08" />
      <Tag y={230} bg="#128a8a" label="32,700.39" />
      <Tag y={285} bg="#d2901c" label="31,397.99" />
      <Tag y={402} bg="#ffd700" label="28,660.94" />
    </svg>
  );
}

function HistAxis() {
  return (
    <svg width={60} height={192} viewBox="1191 432 60 192" className="block">
      {[[461,'300.00'],[487,'200.00'],[513,'100.00'],[539,'0.00'],[566,'-100.00'],[592,'-200.00']].map(([y, l]) => (
        <AxisLabel key={l as string} y={y as number} label={l as string} />
      ))}
      <Tag y={481} bg="#daa520" label="225.08" h={14} />
    </svg>
  );
}

function TopAxis() {
  return (
    <svg width={60} height={70} viewBox="1191 624 60 70" className="block">
      <line x1={1191} x2={1195} y1={638.5} y2={638.5} stroke="#444444" />
      <line x1={1191} x2={1195} y1={681.5} y2={681.5} stroke="#444444" />
      <AxisLabel y={649} label="0.60" />
      <AxisLabel y={670} label="-0.20" />
      <Tag y={662} bg="#daa520" label="0.10" h={15} />
    </svg>
  );
}

function TimeAxis() {
  return (
    <svg width={1220} height={19} viewBox="31 694 1220 19" className="block">
      <line x1={31} x2={1251} y1={694.5} y2={694.5} stroke="#555555" strokeWidth={1} />
      {monthX.map((x, m) => {
        const next = monthX[m + 1] ?? 1191;
        const ticks: number[] = [];
        for (let t = x + 35; t < next - 10; t += 35) ticks.push(t);
        return (
          <g key={x}>
            <line x1={x + 0.5} x2={x + 0.5} y1={694} y2={700} stroke="#555555" />
            {ticks.map((t) => <line key={t} x1={t + 0.5} x2={t + 0.5} y1={694} y2={697} stroke="#555555" />)}
            <text x={x} y={710} textAnchor="middle" fill="#0000cd" className="text-[11.5px] font-bold">{months[m]}</text>
          </g>
        );
      })}
      <line x1={33.5} x2={33.5} y1={694} y2={697} stroke="#555555" />
      <line x1={68.5} x2={68.5} y1={694} y2={697} stroke="#555555" />
    </svg>
  );
}

export default function App() {
  return (
    <div className="h-[716px] w-[1253px] overflow-hidden bg-black px-[2px] pt-[3px] pb-[3px] font-['Liberation_Sans',sans-serif]">
      <div className="flex h-full w-full flex-col bg-white">
        <div className="h-[51px] shrink-0 bg-white font-['Roboto',sans-serif]">
          <ToolbarTop />
          <div className="h-px w-[1210px] bg-[#e6ebf3]" />
          <ToolbarBottom />
        </div>
        <div className="flex min-h-0 flex-1">
          <SideBar />
          <div className="flex flex-col">
            <div className="relative flex h-[378px] bg-[#f5f5f5]">
              <PricePlot />
              <div className="absolute left-[1px] top-0 flex w-[1158px] gap-[6.5px] overflow-hidden whitespace-nowrap text-[10.5px] leading-[14px] font-bold text-black">
                <span className="text-[#9a9a9a]">$INDU - Daily</span>
                <span className="text-[#9a9a9a]">DJI</span>
                <span className="text-[#2e8b57]">L=34,347.03</span>
                <span className="text-[#2e8b57]">152.97</span>
                <span className="text-[#2e8b57]">0.45%</span>
                <span>TS=0</span>
                <span>TE=DJI</span>
                <span>B=34,272.36</span>
                <span>BS=0</span>
                <span>A=34,402.00</span>
                <span>AS=0</span>
                <span className="text-[#2e8b57]">O=34,213.04</span>
                <span>Hi=34,386.51</span>
                <span>Lo=34,199.57</span>
                <span>V=352,447</span>
                <span className="text-[11px]">sjh_I_SunnyBands$$_21.10.22 (2047,"TS",Close,Close,01,08,13,0.25,0....</span>
              </div>
              <div className="w-[60px] border-l border-[#444] bg-[#f5f5f5]"><PriceAxis /></div>
            </div>
            <div className="relative flex h-[192px] bg-[#f5f5f5]">
              <HistPlot />
              <div className="absolute left-[1px] top-[1px] flex gap-[6px] whitespace-nowrap text-[11px] leading-[14px] font-bold text-black">
                <span>sjh_I_DynamicMAV_Hst 21_10_11 (2047,"TS",Close,Close,08,13,0.25,0.25,00,...</span>
                <span className="text-[#daa520]">225.08</span>
                <span className="text-[#999]">0.00</span>
              </div>
              <div className="w-[60px] border-t border-l border-[#444] bg-[#f5f5f5]"><HistAxis /></div>
            </div>
            <div className="relative flex h-[70px] bg-[#f5f5f5]">
              <TopPlot />
              <div className="absolute left-[1px] top-[1px] flex gap-[6px] whitespace-nowrap text-[11px] leading-[14px] font-bold text-black">
                <span>sjh_I_Who'sOnTop_22.01.17 (2047,"TS",Close,Goldenrod,Purple,05, TRUE,...</span>
                <span className="text-[#daa520]">0.10</span>
              </div>
              <div className="w-[60px] border-t border-l border-[#444] bg-[#f5f5f5]"><TopAxis /></div>
            </div>
            <div className="h-[19px] bg-[#f5f5f5]"><TimeAxis /></div>
          </div>
        </div>
      </div>
    </div>
  );
}
